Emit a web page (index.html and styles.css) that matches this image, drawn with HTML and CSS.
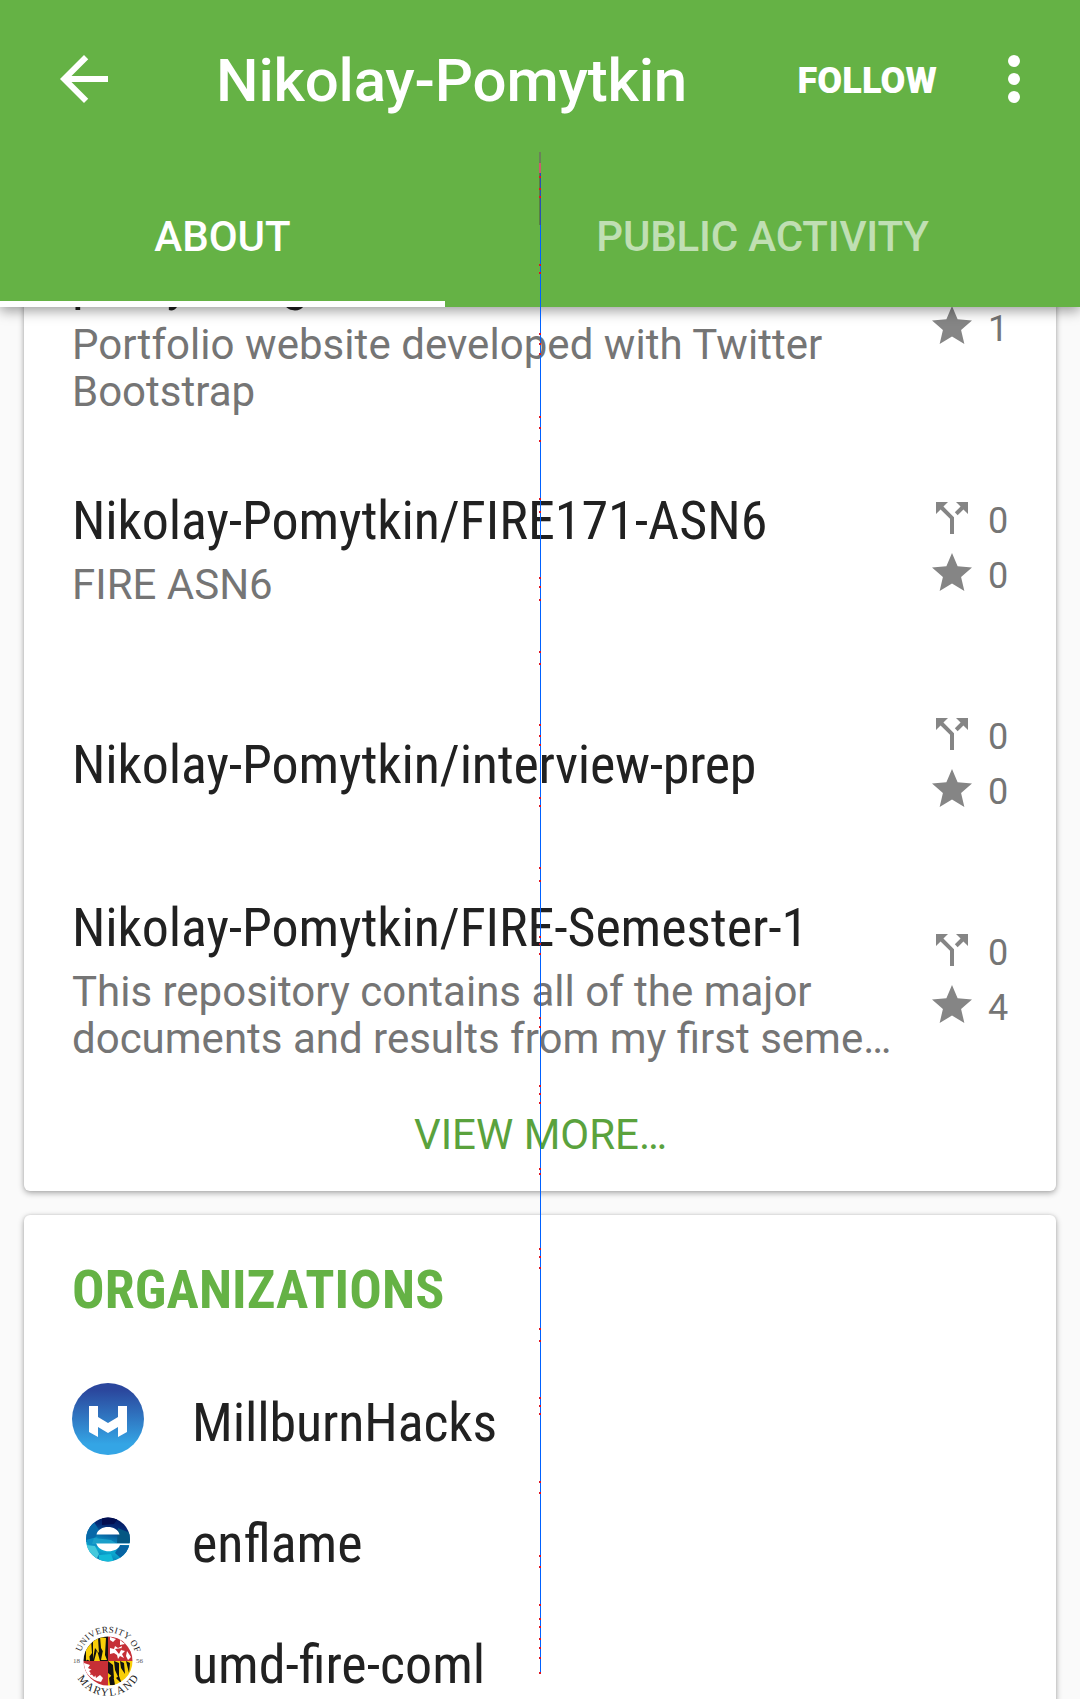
FILE: index.html
```html
<!DOCTYPE html>
<html lang="en">
<head>
<meta charset="utf-8">
<title>Nikolay-Pomytkin</title>
<link rel="stylesheet" href="styles.css">
</head>
<body>
<svg width="0" height="0" class="defs">
  <symbol id="fork" viewBox="0 0 24 24"><path d="M14 4l2.29 2.29-2.88 2.88 1.42 1.42 2.88-2.88L20 10V4zm-4 0H4v6l2.29-2.29 4.71 4.7V20h2v-8.41l-5.29-5.3z"/></symbol>
  <symbol id="star" viewBox="0 0 24 24"><path d="M12 17.27L18.18 21l-1.64-7.03L22 9.24l-7.19-.61L12 2 9.19 8.63 2 9.24l5.46 4.73L5.82 21z"/></symbol>
</svg>
<header class="header">
  <div class="toolbar">
    <svg class="tool-icon" viewBox="0 0 24 24"><path d="M20 11H7.83l5.59-5.59L12 4l-8 8 8 8 1.41-1.41L7.83 13H20z"/></svg>
    <h1 class="title">Nikolay-Pomytkin</h1>
    <span class="follow">FOLLOW</span>
    <svg class="tool-icon" viewBox="0 0 24 24"><circle cx="12" cy="6" r="2"/><circle cx="12" cy="12" r="2"/><circle cx="12" cy="18" r="2"/></svg>
  </div>
  <nav class="tabs">
    <span class="tab tab-active">ABOUT</span>
    <span class="tab tab-wide">PUBLIC ACTIVITY</span>
  </nav>
</header>
<main class="content">
  <section class="card repos">
    <article class="repo repo-tall">
      <div class="repo-text">
        <h2 class="name"><span class="cond">Nikolay-Pomytkin/nikolay-<br>pomytkin.github.io</span></h2>
        <p class="desc desc-two"><span class="loose">Portfolio website developed with Twitter</span><br>Bootstrap</p>
      </div>
      <div class="stats">
        <div class="stat"><svg class="icon"><use href="#fork"/></svg><span>0</span></div>
        <div class="stat"><svg class="icon"><use href="#star"/></svg><span>1</span></div>
      </div>
    </article>
    <article class="repo">
      <div class="repo-text">
        <h2 class="name"><span class="cond snug">Nikolay-Pomytkin/</span><span class="cond">FIRE171-ASN6</span></h2>
        <p class="desc">FIRE ASN6</p>
      </div>
      <div class="stats">
        <div class="stat"><svg class="icon"><use href="#fork"/></svg><span>0</span></div>
        <div class="stat"><svg class="icon"><use href="#star"/></svg><span>0</span></div>
      </div>
    </article>
    <article class="repo">
      <div class="repo-text">
        <h2 class="name"><span class="cond snug">Nikolay-Pomytkin/<span class="tight">interview-prep</span></span></h2>
      </div>
      <div class="stats">
        <div class="stat"><svg class="icon"><use href="#fork"/></svg><span>0</span></div>
        <div class="stat"><svg class="icon"><use href="#star"/></svg><span>0</span></div>
      </div>
    </article>
    <article class="repo repo-last">
      <div class="repo-text">
        <h2 class="name"><span class="cond snug">Nikolay-Pomytkin/FIRE-Semester-1</span></h2>
        <p class="desc desc-two">This repository contains all of the major<br>documents and results from my first seme…</p>
      </div>
      <div class="stats">
        <div class="stat"><svg class="icon"><use href="#fork"/></svg><span>0</span></div>
        <div class="stat"><svg class="icon"><use href="#star"/></svg><span>4</span></div>
      </div>
    </article>
    <div class="more">VIEW MORE…</div>
  </section>
  <section class="card orgs">
    <h2 class="section-title"><span class="cond">ORGANIZATIONS</span></h2>
    <div class="org">
      <svg class="avatar" viewBox="0 0 72 72">
        <defs><linearGradient id="mh" x1="0" y1="0" x2="0" y2="1"><stop offset=".1" stop-color="#2b479d"/><stop offset=".85" stop-color="#34a5e5"/></linearGradient></defs>
        <circle cx="36" cy="36" r="36" fill="url(#mh)"/>
        <path fill="#fff" d="M17 23h9v11l10 6 10-6V23h9v26l-9 5V44l-10 6-10-6v10l-9-5z"/>
      </svg>
      <span class="name"><span class="cond snug">MillburnHacks</span></span>
    </div>
    <div class="org">
      <svg class="avatar" viewBox="0 0 72 72">
        <defs>
          <linearGradient id="ef" x1=".6" y1="0" x2=".35" y2="1"><stop offset="0" stop-color="#04175f"/><stop offset=".22" stop-color="#052c77"/><stop offset=".5" stop-color="#087fb6"/><stop offset=".75" stop-color="#0ba9d0"/><stop offset="1" stop-color="#0870ae"/></linearGradient>
          <clipPath id="ec"><circle cx="36" cy="35.500" r="22"/></clipPath>
        </defs>
        <g clip-path="url(#ec)">
          <path fill="url(#ef)" d="M14 13h44v45H14z"/>
          <path fill="#0768a8" d="M14 26l8-8 5 8-4 8-9 4z"/>
          <path fill="#0d91c6" d="M14 36l11-3 3 6-7 8z"/>
          <path fill="#1b9fc9" d="M22 34l17 2 6 4H20z"/>
          <path fill="#045783" d="M46 24l12 5v10H45z"/>
          <path fill="#45c9dc" d="M14 41l9 1 4 8-3 6-7-5z"/>
          <path fill="#13bad8" d="M27 51l12-1 3 8H27z"/>
          <path fill="#0764a3" d="M43 49l5-8 10 1-7 14z"/>
          <path fill="#020e50" d="M30 13h17l-5 7-12 1z"/>
        </g>
        <path fill="#fff" d="M24.500 30.500c2-10 21-10 23 0zM24 39.500h34v1.500H48c-3 8.500-20 8.500-23.500-1z"/>
      </svg>
      <span class="name"><span class="cond">enflame</span></span>
    </div>
    <div class="org">
      <svg class="avatar" viewBox="0 0 72 72">
        <defs>
          <clipPath id="uc"><circle cx="36" cy="36" r="24.5"/></clipPath>
          <path id="arc-top" d="M7.500 36a28.500 28.500 0 0 1 57 0"/>
          <path id="arc-bottom" d="M1 36a35 35 0 0 0 70 0"/>
        </defs>
        <g clip-path="url(#uc)">
          <path fill="#111" d="M11 11h25v25H11z"/>
          <path fill="#c62f36" d="M36 11h25v25H36zM11 36h25v25H11z"/>
          <path fill="#f8ce08" d="M36 36h25v25H36z"/>
          <path fill="#f8ce08" d="M14 21l5-6 1 13-6 8zM21 16l5-3 1 15-4-5-2 11zM28 12l6 1-1 17-4-7zM14 34l3-6 1 8zM22 36l3-11 3 11zM29 35l2-10 4 10z"/>
          <path fill="#111" d="M36 36l5 4 1 13-6-5zM42 36l5 2v16l-4-9zM48 36l4 2 1 11-4-6zM54 36l4 2-1 10zM37 53l4-4 2 11h-5zM44 53l3-2 3 8z"/>
          <path fill="#fff" d="M38 23l4 1 1-3 3 2 4-2-1 4 4 1-3 3 2 4-4-2-2 3-1-4-3-2-4 1zM38 12l6 2-3 3-3-2zM48 15l5 4-5 1zM55 26l4 6-3 3-2-4zM12 38l6 2-2 3 4 2-2 5 5-1 1 4 4-3 3 3-2 4-4-1c-8-3-13-10-13-18z"/>
          <path fill="#c62f36" d="M43 24l7-1-3 6zM17 46l5-3 4 5-4 4z"/>
        </g>
        <g class="seal-text">
          <text><textPath href="#arc-top" startOffset="9" textLength="72">UNIVERSITY OF</textPath></text>
          <text class="seal-bottom"><textPath href="#arc-bottom" startOffset="18" textLength="74">MARYLAND</textPath></text>
          <text class="seal-year" x="1" y="38">18</text><text class="seal-year" x="64" y="38">56</text>
        </g>
      </svg>
      <span class="name"><span class="cond">umd-fire-coml</span></span>
    </div>
  </section>
</main>
<svg class="seam" viewBox="0 0 2 1522" shape-rendering="crispEdges">
  <path fill="#6c805a" d="M0 0h2v11H0z"/>
  <path fill="#cc5c6d" d="M0 11h2v10H0z"/>
  <path fill="#5b803f" d="M0 21h1v52H0z"/>
  <path fill="#2850b5" d="M1 21h1v52H1z"/>
  <path fill="#0061ff" d="M1 73h1v1449H1z"/>
  <path stroke="#e01523" stroke-width="2" fill="none" d="M0 25h2M0 37h2M0 45h2M0 113h2M0 121h2M0 182h2M0 192h2M0 202h2M0 265h2M0 276h2M0 289h2M0 347h2M0 360h2M0 426h2M0 435h2M0 448h2M0 500h2M0 512h2M0 573h2M0 584h2M0 593h2M0 646h2M0 654h2M0 716h2M0 729h2M0 785h2M0 792h2M0 802h2M0 866h2M0 875h2M0 934h2M0 942h2M0 951h2M0 1017h2M0 1022h2M0 1097h2M0 1105h2M0 1116h2M0 1177h2M0 1189h2M0 1246h2M0 1254h2M0 1262h2M0 1330h2M0 1341h2M0 1404h2M0 1415h2M0 1453h2M0 1467h2M0 1475h2M0 1487h2M0 1496h2M0 1506h2M0 1521h2"/>
</svg>
</body>
</html>
```
FILE: styles.css
```css
* { box-sizing: border-box; }
body {
  margin: 0;
  height: 1699px;
  overflow: hidden;
  position: relative;
  display: flex;
  flex-direction: column;
  background: #fafafa;
  font-family: Roboto, sans-serif;
  color: #212121;
}
h1, h2, p { margin: 0; }
.defs { position: absolute; }
.header {
  position: relative;
  z-index: 2;
  flex: none;
  height: 307px;
  background: #65b245;
  color: #fff;
  box-shadow: 0 4px 12px rgba(0, 0, 0, .38);
}
.toolbar {
  display: flex;
  align-items: center;
  height: 158px;
  padding: 0 30px 0 48px;
}
.tool-icon { width: 72px; height: 72px; fill: #fff; flex: none; }
.title {
  flex: 1;
  margin-left: 96px;
  padding-top: 4px;
  font-size: 60px;
  font-weight: 500;
  line-height: 70px;
  letter-spacing: -.17px;
}
.follow {
  padding-top: 3px;
  margin-right: 41px;
  font-size: 36px;
  font-weight: 900;
  letter-spacing: .15px;
}
.tabs { display: flex; height: 149px; }
.tab {
  width: 445px;
  padding-top: 54px;
  text-align: center;
  font-size: 42px;
  font-weight: 500;
  line-height: 49px;
}
.tab-active { border-bottom: 6px solid #fff; }
.tab-wide { width: 635px; letter-spacing: -.18px; color: rgba(255, 255, 255, .6); }
.content { flex: 1; min-height: 0; overflow: hidden; padding: 0 24px; }
.card {
  background: #fff;
  border-radius: 6px;
  box-shadow: 0 2px 6px rgba(0, 0, 0, .33), 0 0 3px rgba(0, 0, 0, .1);
}
.repos { margin-top: -133px; height: 1017px; }
.repo {
  display: flex;
  align-items: center;
  height: 216px;
  padding: 0 48px;
}
.repo-tall { height: 278px; }
.repo-text { flex: 1; padding-bottom: 23px; white-space: nowrap; }
.repo-last .repo-text { padding-bottom: 25px; }
.name {
  font-size: 54px;
  font-weight: 400;
  line-height: 63px;
}
.cond { display: inline-block; font-family: "Roboto Condensed", Roboto, sans-serif; font-stretch: 75%; }
.snug { letter-spacing: -.12px; }
.tight { letter-spacing: -.3px; }
.loose { letter-spacing: .05px; }
.desc { margin-top: 9px; font-size: 42px; line-height: 47px; color: #757575; }
.desc-two { margin-bottom: 2px; }
.stats { width: 80px; padding-bottom: 22px; }
.stat {
  display: flex;
  align-items: flex-start;
  gap: 12px;
  height: 55px;
  font-size: 36px;
  line-height: 54px;
  color: #757575;
}
.icon { flex: none; width: 48px; height: 48px; fill: #858585; }
.more {
  padding: 10px 0 0 1px;
  text-align: center;
  font-size: 42px;
  line-height: 49px;
  color: #5aa23d;
}
.orgs { margin-top: 24px; height: 560px; padding: 43px 48px; }
.section-title {
  margin-bottom: 37px;
  font-size: 54px;
  font-weight: 700;
  line-height: 63px;
  letter-spacing: .14px;
  color: #65b245;
}
.org {
  display: flex;
  align-items: center;
  gap: 48px;
  height: 121px;
}
.org .name { padding-top: 7px; }
.avatar { width: 72px; height: 72px; flex: none; overflow: visible; }
.seal-text { font-family: "Liberation Serif", serif; font-size: 9px; fill: #222; }
.seal-bottom { font-size: 11px; }
.seal-year { font-size: 7px; fill: #555; }
.seam {
  position: absolute;
  z-index: 3;
  left: 539px;
  top: 152px;
  width: 2px;
  height: 1522px;
}
```
